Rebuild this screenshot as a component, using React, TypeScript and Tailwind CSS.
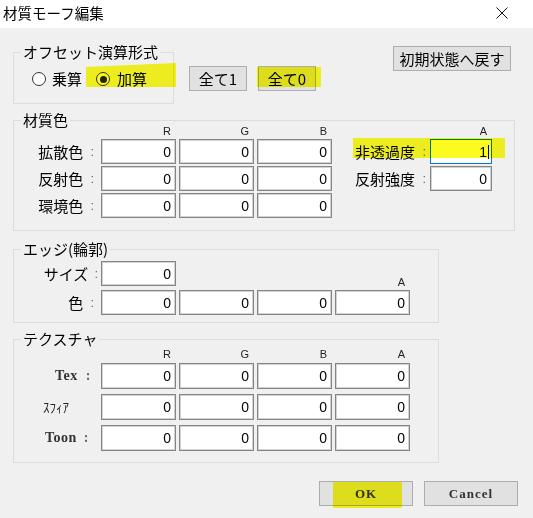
import React from "react";

const NUM = "font-['Liberation_Sans',sans-serif]";

function Box({ v, wide = false, tall = false }: { v: string; wide?: boolean; tall?: boolean }) {
  return (
    <div
      className={`${wide ? "w-[62px]" : "w-[75px]"} ${tall ? "h-[26px]" : "h-[25px]"} bg-white border border-[#858585] shadow-[inset_0_0_0_1px_#d2d2d2] flex items-center justify-end pr-[4px] text-[14px] leading-[16px] ${NUM} text-black`}
    >
      {v}
    </div>
  );
}

function Hdr({ t }: { t: string }) {
  return (
    <div className="text-right pr-[5px] text-[11px] leading-[11px] h-[11px] font-['Liberation_Sans',sans-serif] text-[#222]">
      {t}
    </div>
  );
}

function Label({ t, tight = false }: { t: string; tight?: boolean }) {
  return (
    <div className="flex items-center justify-end text-[15px] leading-[20px]">
      <span className={tight ? "mr-[6px]" : "mr-[7px]"}>{t}</span>
      <span className={`${NUM} text-[13px] text-[#666] ${tight ? "pr-0" : "pr-[4px]"}`}>:</span>
    </div>
  );
}

function SerifLabel({ t, pl, gap }: { t: string; pl: string; gap: string }) {
  return (
    <div className={`flex items-center ${pl} text-[14px] leading-[16px] font-bold font-['Liberation_Serif',serif] text-[#333] tracking-[0.5px]`}>
      <span>{t}</span>
      <span className={`${gap} text-[#666]`}>:</span>
    </div>
  );
}

function Btn({ children, w, serif = false }: { children: React.ReactNode; w: string; serif?: boolean }) {
  return (
    <div
      className={`${w} h-[25px] bg-[#e1e1e1] border border-[#adadad] flex items-center justify-center ${
        serif ? "text-[13px] font-bold font-['Liberation_Serif',serif] text-[#333] tracking-[1px]" : "text-[15px]"
      } leading-[18px]`}
    >
      {children}
    </div>
  );
}

function Radio({ checked }: { checked: boolean }) {
  return (
    <span className="w-[14px] h-[14px] rounded-full border border-[#333] bg-white flex items-center justify-center shrink-0">
      {checked && <span className="w-[7px] h-[7px] rounded-full bg-[#222]" />}
    </span>
  );
}

export default function App() {
  return (
    <div className="relative w-[533px] h-[518px] bg-[#f0f0f0] overflow-hidden text-black font-['Noto_Sans_CJK_JP',sans-serif]">
      {/* title bar */}
      <div className="h-[28px] bg-white flex items-center justify-between pl-[3px] pr-[25px]">
        <span className="text-[14.5px] leading-[20px] -mt-[2px]">材質モーフ編集</span>
        <svg width="12" height="12" viewBox="0 0 12 12" className="-mt-[2px]">
          <path d="M0.5 0.5L11.5 11.5M11.5 0.5L0.5 11.5" stroke="#111" strokeWidth="1" />
        </svg>
      </div>

      {/* top row */}
      <div className="flex items-start">
        <fieldset className="ml-[13px] mt-[15px] w-[161px] border border-[#dcdcdc] pb-[14px]">
          <legend className="ml-[7px] px-[2px] text-[15px] leading-[18px]">オフセット演算形式</legend>
          <div className="mt-[8px] h-[20px] flex items-center text-[15px] leading-[20px] pl-[18px]">
            <Radio checked={false} />
            <span className="ml-[6px]">乗算</span>
            <span className="ml-[14px]">
              <Radio checked={true} />
            </span>
            <span className="ml-[7px]">加算</span>
          </div>
        </fieldset>
        <div className="ml-[15px] mt-[38px]">
          <Btn w="w-[58px]">全て1</Btn>
        </div>
        <div className="ml-[11px] mt-[38px]">
          <Btn w="w-[58px]">全て0</Btn>
        </div>
        <div className="ml-auto mr-[22px] mt-[18px]">
          <Btn w="w-[118px]">初期状態へ戻す</Btn>
        </div>
      </div>

      {/* 材質色 */}
      <fieldset className="ml-[13px] mt-[7px] w-[502px] border border-[#dcdcdc] pb-[12px]">
        <legend className="ml-[7px] px-[2px] text-[15px] leading-[18px]">材質色</legend>
        <div className="grid grid-cols-[84px_75px_75px_75px_92px_62px] gap-x-[3px] gap-y-[2px] -mt-[3px]">
          <div />
          <Hdr t="R" />
          <Hdr t="G" />
          <Hdr t="B" />
          <div />
          <Hdr t="A" />

          <Label t="拡散色" />
          <Box v="0" />
          <Box v="0" />
          <Box v="0" />
          <div className="flex items-center justify-between pl-[20px] text-[15px] leading-[20px]">
            <span>非透過度</span>
            <span className={`${NUM} text-[13px] text-[#666] pr-[1px]`}>:</span>
          </div>
          <div className="w-[62px] h-[25px] bg-white border border-[#0078d7] flex items-center justify-end pr-[2px] text-[14px] leading-[16px] font-['Liberation_Sans',sans-serif]">
            <span>1</span>
            <span className="w-[1px] h-[14px] bg-black ml-[1px]" />
          </div>

          <Label t="反射色" />
          <Box v="0" />
          <Box v="0" />
          <Box v="0" />
          <div className="flex items-center justify-between pl-[20px] text-[15px] leading-[20px]">
            <span>反射強度</span>
            <span className={`${NUM} text-[13px] text-[#666] pr-[1px]`}>:</span>
          </div>
          <Box v="0" wide />

          <Label t="環境色" />
          <Box v="0" />
          <Box v="0" />
          <Box v="0" />
          <div />
          <div />
        </div>
      </fieldset>

      {/* エッジ(輪郭) */}
      <fieldset className="ml-[13px] mt-[9px] w-[426px] border border-[#dcdcdc] pb-[7px]">
        <legend className="ml-[7px] px-[2px] text-[15px] leading-[18px]">エッジ(輪郭)</legend>
        <div className="grid grid-cols-[84px_75px_75px_75px_75px] gap-x-[3px] gap-y-[4px] mt-[3px]">
          <Label t="サイズ" tight />
          <Box v="0" />
          <div />
          <div />
          <div className="self-end -mb-[2px]">
            <Hdr t="A" />
          </div>

          <Label t="色" />
          <Box v="0" />
          <Box v="0" />
          <Box v="0" />
          <Box v="0" />
        </div>
      </fieldset>

      {/* テクスチャ */}
      <fieldset className="ml-[13px] mt-[7px] w-[426px] border border-[#dcdcdc] pb-[11px]">
        <legend className="ml-[7px] px-[2px] text-[15px] leading-[18px]">テクスチャ</legend>
        <div className="grid grid-cols-[84px_75px_75px_75px_75px] gap-x-[3px] mt-[1px]">
          <div />
          <Hdr t="R" />
          <Hdr t="G" />
          <Hdr t="B" />
          <Hdr t="A" />
        </div>
        <div className="grid grid-cols-[84px_75px_75px_75px_75px] gap-x-[3px] gap-y-[5px] mt-[3px]">
          <SerifLabel t="Tex" pl="pl-[41px]" gap="ml-[8px]" />
          <Box v="0" tall />
          <Box v="0" tall />
          <Box v="0" tall />
          <Box v="0" tall />

          <div className="flex items-center pl-[29px] text-[13px] leading-[16px] text-[#222]">ｽﾌｨｱ</div>
          <Box v="0" tall />
          <Box v="0" tall />
          <Box v="0" tall />
          <Box v="0" tall />

          <SerifLabel t="Toon" pl="pl-[31px]" gap="ml-[7px]" />
          <Box v="0" tall />
          <Box v="0" tall />
          <Box v="0" tall />
          <Box v="0" tall />
        </div>
      </fieldset>

      {/* bottom buttons */}
      <div className="flex justify-end gap-[11px] mt-[18px] mr-[15px]">
        <Btn w="w-[94px]" serif>OK</Btn>
        <Btn w="w-[94px]" serif>Cancel</Btn>
      </div>

      {/* highlighter marks */}
      <div className="absolute left-[86px] top-[63px] w-[90px] h-[24px] bg-[#fbfb22] mix-blend-multiply [clip-path:polygon(0_4px,100%_0,100%_100%,0_100%)]" />
      <div className="absolute left-[257px] top-[67px] w-[64px] h-[20px] bg-[#fbfb22] mix-blend-multiply" />
      <div className="absolute left-[353px] top-[138px] w-[152px] h-[20px] bg-[#fbfb22] mix-blend-multiply" />
      <div className="absolute left-[333px] top-[482px] w-[69px] h-[26px] bg-[#fbfb22] mix-blend-multiply" />
    </div>
  );
}
